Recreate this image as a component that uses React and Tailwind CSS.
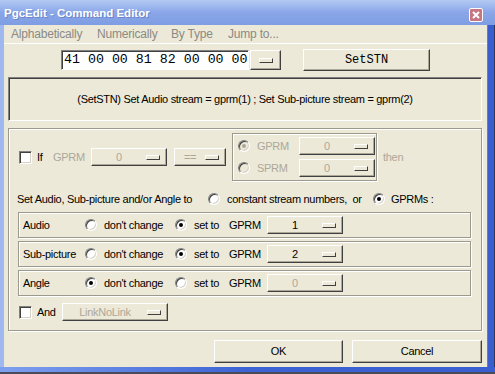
import React from 'react'

const raised = "border border-t-white border-l-white border-r-[#404040] border-b-[#404040] shadow-[inset_-1px_-1px_0_#aca899]"
const sunken = "border border-t-[#808080] border-l-[#808080] border-r-white border-b-white shadow-[inset_1px_1px_0_#404040]"
const etched = "border border-[#9c9a8e] shadow-[inset_1px_1px_0_#fff,1px_1px_0_#fff]"

const Dash = () => (
  <span className="block w-[14px] h-[5px] border border-t-white border-l-white border-r-[#404040] border-b-[#404040] bg-[#ece9d8]" />
)

const Drop = ({ text, w, disabled }) => (
  <div className={`${raised} h-[18px] flex items-center bg-[#ece9d8] shrink-0`} style={{ width: w }}>
    <span className={`flex-1 text-center leading-none ${disabled ? "text-[#aca899]" : "text-black"}`}>{text}</span>
    <span className="mr-[6px]"><Dash /></span>
  </div>
)

const Radio = ({ checked, disabled }) => (
  <span className={`relative block shrink-0 w-[12px] h-[12px] rounded-full border border-t-[#808080] border-l-[#808080] border-r-white border-b-white shadow-[inset_1px_1px_0_#404040,inset_-1px_-1px_0_#d4d0c8] ${disabled ? "bg-[#ece9d8]" : "bg-white"}`}>
    {checked && (
      <span className={`absolute left-[3px] top-[3px] w-[4px] h-[4px] rounded-full ${disabled ? "bg-[#aca899]" : "bg-black"}`} />
    )}
  </span>
)

const Check = () => (
  <span className="block shrink-0 w-[13px] h-[13px] bg-white border border-t-[#808080] border-l-[#808080] border-r-white border-b-white shadow-[inset_1px_1px_0_#404040,inset_-1px_-1px_0_#d4d0c8]" />
)

const StreamRow = ({ label, keep, value }) => (
  <div className={`${etched} ml-[9px] w-[453px] h-[26px] flex items-center`}>
    <span className="pl-[4px] w-[66px]">{label}</span>
    <Radio checked={keep} />
    <span className="ml-[7px] w-[71px]">don't change</span>
    <Radio checked={!keep} />
    <span className="ml-[7px] w-[35px]">set to</span>
    <span className="w-[38px]">GPRM</span>
    <Drop text={value} w={76} disabled={keep} />
  </div>
)

export default function App() {
  return (
    <div className="w-[495px] h-[374px] flex flex-col bg-[#3a5ed0] overflow-hidden font-['Liberation_Sans',Arial,sans-serif] text-[11px] tracking-[-0.3px] text-black">
      {/* title bar */}
      <div className="h-[25px] shrink-0 flex items-center bg-linear-to-b from-[#b4caf4] via-[#8aa6e8] to-[#7f9de3]">
        <span className="pl-[4px] pt-[2px] text-white font-bold text-[11.5px] tracking-[0px] [text-shadow:1px_1px_0_#6a86c8]">PgcEdit - Command Editor</span>
        <span className="ml-auto mr-[12px] mt-[4px] w-[14px] h-[14px] rounded-[2px] border border-white bg-[#c77483] flex items-center justify-center">
          <svg width="8" height="8" viewBox="0 0 8 8">
            <path d="M1 1 L7 7 M7 1 L1 7" stroke="#fff" strokeWidth="2" />
          </svg>
        </span>
      </div>

      <div className="flex flex-1">
        <div className="w-[4px] bg-[#9fb8ef]" />
        <div className="w-[483px] bg-[#ece9d8] flex flex-col">
          {/* menu */}
          <div className="h-[19px] flex items-center pl-[7px] text-[12px] tracking-[-0.2px] text-[#8b8a84] border-b border-white">
            <span className="w-[86px]">Alphabetically</span>
            <span className="w-[74px]">Numerically</span>
            <span className="w-[57px]">By Type</span>
            <span>Jump to...</span>
          </div>

          {/* command input */}
          <div className="mt-[5px] h-[22px] flex items-center">
            <div className={`${sunken} ml-[57px] w-[188px] h-[20px] bg-white flex items-center pl-[2px] font-['Liberation_Mono',monospace] text-[13.3px] tracking-[0px]`}>
              41 00 00 81 82 00 00 00
            </div>
            <div className={`${raised} ml-[1px] w-[31px] h-[20px] flex items-center justify-center`}>
              <Dash />
            </div>
            <div className={`${raised} ml-[22px] w-[127px] h-[22px] flex items-center justify-center font-['Liberation_Mono',monospace] text-[12px] tracking-[0px]`}>
              SetSTN
            </div>
          </div>

          {/* description */}
          <div className={`${sunken} mt-[6px] ml-[4px] w-[474px] h-[44px] flex items-center justify-center`}>
            (SetSTN) Set Audio stream = gprm(1) ; Set Sub-picture stream = gprm(2)
          </div>

          {/* main group */}
          <div className={`${etched} mt-[7px] ml-[4px] w-[474px] h-[203px] flex flex-col`}>
            <div className="mt-[4px] h-[48px] flex items-center">
              <span className="ml-[10px]"><Check /></span>
              <span className="ml-[5px] w-[16px]">If</span>
              <span className="w-[38px] text-[#aca899]">GPRM</span>
              <Drop text="0" w={76} disabled />
              <span className="ml-[7px]"><Drop text="==" w={52} disabled /></span>
              <div className={`${etched} ml-[6px] w-[145px] h-[48px] flex flex-col pt-[3px] gap-[4px]`}>
                <div className="h-[18px] flex items-center pl-[5px]">
                  <Radio checked disabled />
                  <span className="ml-[7px] w-[42px] text-[#aca899]">GPRM</span>
                  <Drop text="0" w={76} disabled />
                </div>
                <div className="h-[18px] flex items-center pl-[5px]">
                  <Radio disabled />
                  <span className="ml-[7px] w-[42px] text-[#aca899]">SPRM</span>
                  <Drop text="0" w={76} disabled />
                </div>
              </div>
              <span className="ml-[6px] text-[#aca899]">then</span>
            </div>

            <div className="mt-[9px] h-[18px] flex items-center">
              <span className="ml-[8px] w-[191px]">Set Audio, Sub-picture and/or Angle to</span>
              <Radio />
              <span className="ml-[7px] w-[146px]">constant stream numbers,&nbsp; or</span>
              <Radio checked />
              <span className="ml-[6px]">GPRMs :</span>
            </div>

            <div className="mt-[4px] flex flex-col gap-[3px]">
              <StreamRow label="Audio" value="1" />
              <StreamRow label="Sub-picture" value="2" />
              <StreamRow label="Angle" value="0" keep />
            </div>

            <div className="mt-[7px] h-[18px] flex items-center">
              <span className="ml-[10px]"><Check /></span>
              <span className="ml-[5px] w-[25px]">And</span>
              <Drop text="LinkNoLink" w={106} disabled />
            </div>
          </div>

          {/* buttons */}
          <div className="mt-[9px] flex">
            <div className={`${raised} ml-[210px] w-[129px] h-[23px] flex items-center justify-center`}>OK</div>
            <div className={`${raised} ml-[9px] w-[130px] h-[23px] flex items-center justify-center`}>Cancel</div>
          </div>
        </div>
        <div className="w-[8px] border-l border-[#7d7d8a] bg-[#3a5ed0] border-r border-r-[#30385a]" />
      </div>
      <div className="h-[7px] shrink-0 bg-linear-to-r from-[#7f9fee] via-[#3d62d4] to-[#3a5ed0] border-b-2 border-[#4a4a58]" />
    </div>
  )
}
